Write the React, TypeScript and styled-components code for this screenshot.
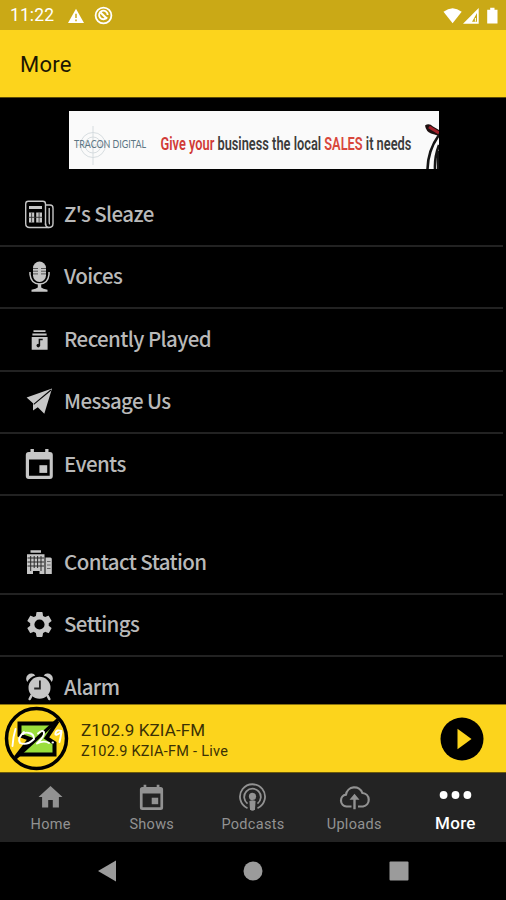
import React from "react";
import styled, { createGlobalStyle } from "styled-components";

const yellow = "#fcd41c";

const GlobalStyle = createGlobalStyle`
  * { box-sizing: border-box; }
  body { margin: 0; background: #000; overflow: hidden; }
`;

const Screen = styled.div`
  width: 506px;
  height: 900px;
  display: flex;
  flex-direction: column;
  overflow: hidden;
  background: #000;
  font-family: Roboto, sans-serif;
`;

const StatusBar = styled.header`
  flex: 0 0 30px;
  display: flex;
  align-items: center;
  padding: 1px 7px 0 10px;
  background: #caa916;
  color: #fff;
`;

const Clock = styled.span`
  width: 57px;
  font-size: 17.5px;
  line-height: 29px;
  letter-spacing: 0.1px;
`;

const StatusIcons = styled.div<{ $right?: boolean }>`
  display: flex;
  align-items: center;
  margin-left: ${(p) => (p.$right ? "auto" : "0")};
  gap: ${(p) => (p.$right ? "0" : "9px")};
`;

const TitleBar = styled.div`
  flex: 0 0 68px;
  display: flex;
  align-items: center;
  padding: 1px 20px 0;
  background: ${yellow};
  border-bottom: 1px solid #5c4c08;
`;

const Title = styled.h1`
  margin: 0;
  font-size: 22px;
  font-weight: 400;
  letter-spacing: 0.25px;
  color: #1c1702;
`;

const Content = styled.main`
  flex: 1 1 0;
  min-height: 0;
  overflow: hidden;
  display: flex;
  flex-direction: column;
`;

const Banner = styled.div`
  flex: 0 0 58px;
  width: 370px;
  margin: 13px 0 15.4px 68.5px;
  background: #fafafa;
  svg { display: block; }
`;

const MenuGroup = styled.ul<{ $gap?: boolean }>`
  flex: none;
  list-style: none;
  padding: 0;
  margin: ${(p) => (p.$gap ? "35.8px" : "0")} 0 0;
`;

const MenuRow = styled.li`
  display: flex;
  align-items: center;
  height: 62.4px;
  padding-left: 20px;
  margin-right: 3px;
  border-bottom: 2px solid #222;
`;

const MenuIcon = styled.span`
  width: 39px;
  height: 39px;
  margin-right: 5px;
  color: #c6c6c6;
  svg { display: block; }
`;

const MenuLabel = styled.span`
  font-family: "Noto Sans CJK JP", "Noto Sans", sans-serif;
  font-weight: 500;
  font-size: 20.5px;
  letter-spacing: -0.6px;
  line-height: 30px;
  margin-top: -3px;
  color: #b9b9b9;
`;

const Player = styled.section`
  flex: 0 0 69px;
  display: flex;
  align-items: center;
  padding: 0 22px 0 4px;
  background: ${yellow};
  border-top: 1px solid #8a740f;
  border-bottom: 1px solid #6b590b;
`;

const TrackInfo = styled.div`
  flex: 1;
  margin-left: 12px;
  padding-top: 3px;
  color: #3b3105;
`;

const TrackName = styled.div`
  font-size: 17px;
  line-height: 22px;
  letter-spacing: 0.1px;
`;

const TrackStatus = styled.div`
  font-size: 14.5px;
  line-height: 21px;
  letter-spacing: 0.25px;
`;

const PlayButton = styled.button`
  padding: 0;
  border: 0;
  width: 44px;
  height: 44px;
  background: none;
  svg { display: block; }
`;

const TabBar = styled.nav`
  flex: 0 0 69px;
  display: grid;
  grid-template-columns: repeat(5, 1fr);
  background: #232323;
`;

const Tab = styled.div<{ $active?: boolean }>`
  display: flex;
  flex-direction: column;
  align-items: center;
  padding-top: 8px;
  color: ${(p) => (p.$active ? "#fff" : "#929292")};
  svg { display: block; flex: none; }
`;

const TabLabel = styled.span<{ $active?: boolean }>`
  font-size: ${(p) => (p.$active ? "17px" : "14.5px")};
  font-weight: ${(p) => (p.$active ? 500 : 400)};
  line-height: ${(p) => (p.$active ? "19px" : "22px")};
  letter-spacing: 0.3px;
`;

const SystemBar = styled.footer`
  flex: 0 0 58px;
  display: grid;
  grid-template-columns: repeat(3, 146px);
  justify-content: center;
  align-items: center;
  justify-items: center;
  color: #9b9b9b;
  svg { display: block; }
`;

const WarningIcon = () => (
  <svg width="18" height="16" viewBox="0 0 18 16">
    <path d="M9 0.8 17 15H1z" fill="#fff" />
    <path d="M9 5.7v4.3M9 11.5v1.7" stroke="#caa916" strokeWidth="1.5" />
  </svg>
);

const SyncIcon = () => (
  <svg width="19" height="19" viewBox="0 0 19 19" fill="none" stroke="#fff">
    <circle cx="9.5" cy="9.5" r="7.9" strokeWidth="1.8" />
    <path d="M13 11.3A4.3 4.3 0 1 1 13.7 9" strokeWidth="1.9" />
    <path d="m6.6 6.6 6.3 6.1" strokeWidth="2.1" />
  </svg>
);

const SignalIcons = () => (
  <svg width="56" height="20" viewBox="0 0 56 20" fill="#fff">
    <path d="M0.5 5.7Q9.6-1.4 18.7 5.7L9.6 17.2z" />
    <path fillRule="evenodd" d="M20 17.7 35.7 2v15.7zM29 15.7h5V7z" />
    <path d="M32.4 12v3.6" stroke="#fff" strokeWidth="1" />
    <path d="M44.2 3.8h3V1.8h4.3v2h3v13.6H44.2z" />
  </svg>
);

const BannerArt = () => (
  <svg width="370" height="58" viewBox="0 0 370 58" role="img">
    <g fill="none" stroke="#d3d9dc" strokeWidth="0.9">
      <circle cx="24" cy="34" r="12.5" />
      <circle cx="24" cy="34" r="8" />
      <path d="M24 15v39M7 34h34" />
    </g>
    <text x="5" y="37.3" fontFamily="Lato, sans-serif" fontSize="10.5" fill="#5c7684" textLength="72" lengthAdjust="spacingAndGlyphs">TRACON DIGITAL</text>
    <text
      transform="translate(91.5 39.3) scale(0.655 1)"
      fontFamily="Roboto, sans-serif"
      fontWeight="600"
      fontSize="19"
      fill="#3c3c3c"
      textLength="383"
      lengthAdjust="spacingAndGlyphs"
    >
      <tspan fill="#d13a36">Give your</tspan> business the local <tspan fill="#d8473c">SALES</tspan> it needs
    </text>
    <path d="M356 14.5q4-3 8 1l6 3.5v6q-5-2-8-2.500q-5-2-6-8z" fill="#1c1010" />
    <path d="M360 16q5 3 10 6" stroke="#a3202a" strokeWidth="3" fill="none" />
    <path d="M370 24Q359 39 358.500 58M370 34Q365.500 46 366 58" stroke="#151515" strokeWidth="2.600" fill="none" />
    <path d="M369 40v18" stroke="#151515" strokeWidth="2" />
  </svg>
);

const Glyph = ({ children, size = 39, box = 39 }: { children: React.ReactNode; size?: number; box?: number }) => (
  <svg width={size} height={size} viewBox={`0 0 ${box} ${box}`} fill="currentColor">{children}</svg>
);

const NewsIcon = () => (
  <Glyph>
    <g fill="none" stroke="currentColor" strokeWidth="1.4">
      <path d="M25.500 30V9q0-2.700-2.700-2.700H8.300Q5.700 6.300 5.700 9v19.500q0 4 4 4h19q4.300 0 4.300-4V13q0-3-3-3h-4.500" />
      <path d="M25.500 28.500q0 3.500 3 4M29.200 13v14q0 2 .8 2" />
    </g>
    <path d="M9 11h13v3H9zM9 17.500h5.200v10H9zM16.200 17.500h5.800v10h-5.800z" />
    <path d="M8.500 22.300h14M11.600 17.500v10M19.100 17.500v10" stroke="#333" strokeWidth=".9" />
  </Glyph>
);

const MicIcon = () => (
  <Glyph>
    <rect x="13" y="4.500" width="13" height="20.500" rx="6.500" />
    <path d="M10 15v2.500q1 9.500 9.500 9.500t9.500-9.500V15" fill="none" stroke="currentColor" strokeWidth="1.500" />
    <path d="M17.800 26.500h3.400v4q1.500 1.300 6.300 2.300v2h-16v-2q4.800-1 6.300-2.300z" />
    <path d="M13 11.500h5M13 14.200h5M13 16.900h5M21 11.500h5M21 14.200h5M21 16.900h5" stroke="#555" strokeWidth="1" />
  </Glyph>
);

const RecentIcon = () => (
  <Glyph>
    <path d="M13.500 10.300h12v1.800h-12zM12.400 13.500h14.200v1.900H12.400zM11.700 17h15.900v12.800H11.700z" />
    <circle cx="18.300" cy="25.600" r="1.800" fill="#111" />
    <path d="M19.400 25.500v-6h3.300" fill="none" stroke="#111" strokeWidth="1.500" />
  </Glyph>
);

const SendIcon = () => (
  <Glyph>
    <path d="M32 6.500 6.600 15.600 13 21.300V28.600L17.800 25.300 24.300 31.700z" />
    <path d="M31 8 13.700 22.300" stroke="#000" strokeWidth="1.100" />
  </Glyph>
);

const CalendarIcon = () => (
  <Glyph>
    <path fillRule="evenodd" d="M10.500 4h3.400v3h11.300V4h3.300v3h1.300q3 0 3 3v21q0 3-3 3H8.800q-3 0-3-3V10q0-3 3-3h1.700zM9 14.600v16.100h20.700V14.600z" />
    <path d="M19.400 20.200h7.800v7.700h-7.800z" />
  </Glyph>
);

const BuildingIcon = () => (
  <Glyph>
    <path d="M10.500 7.200H21v2.500H10.500zM7 11.200h17.500V31h-5v-3h-6.500v3H7z" />
    <path d="M25.500 14.500h4.800q1.500 0 1.500 1.500v15h-6.300z" />
    <path d="M7.500 15H24M7.500 19H24M7.500 23H24M10.700 13v15M14.200 13v12M17.600 13v12M21 13v15" stroke="#2b2b2b" strokeWidth="1" />
    <path d="M27 18.500h3.500M27 22h3.500M27 25.500h3.500" stroke="#666" strokeWidth="1" />
  </Glyph>
);

const GearIcon = () => (
  <Glyph>
    <g transform="translate(4.600 4.600) scale(1.240)">
      <path d="M19.430 12.980c.040-.320.070-.640.070-.980s-.030-.660-.070-.980l2.110-1.650c.190-.150.240-.420.120-.640l-2-3.460c-.120-.220-.390-.300-.610-.220l-2.490 1c-.520-.400-1.080-.730-1.690-.980l-.380-2.650C14.460 2.180 14.250 2 14 2h-4c-.250 0-.460.180-.490.420l-.380 2.650c-.610.250-1.170.590-1.690.980l-2.490-1c-.230-.090-.490 0-.610.220l-2 3.460c-.130.220-.070.490.120.640l2.110 1.650c-.040.320-.070.650-.070.980s.030.660.070.980l-2.110 1.650c-.190.150-.240.420-.120.640l2 3.460c.120.220.390.300.610.220l2.490-1c.520.400 1.080.730 1.690.980l.380 2.650c.030.240.240.420.490.420h4c.250 0 .460-.180.490-.420l.380-2.650c.610-.250 1.170-.590 1.690-.980l2.490 1c.230.090.490 0 .610-.220l2-3.460c.120-.220.070-.490-.120-.640l-2.110-1.650zM12 16.100a4.100 4.100 0 1 1 0-8.200 4.100 4.100 0 0 1 0 8.200z" />
    </g>
  </Glyph>
);

const AlarmIcon = () => (
  <Glyph>
    <circle cx="19.500" cy="19.800" r="11" />
    <path d="M7.300 14a5 5 0 1 1 8-6.500q-5.500 1.700-8 6.500zM31.700 14a5 5 0 1 0-8-6.500q5.500 1.700 8 6.500z" />
    <path d="m11.500 27.500-1.800 3.500M27.500 27.500l1.800 3.500" stroke="currentColor" strokeWidth="2.600" strokeLinecap="round" />
    <path d="M19.900 12.500v8h-5.700" fill="none" stroke="#222" strokeWidth="1.800" />
  </Glyph>
);

const StationLogo = () => (
  <svg width="65" height="65" viewBox="0 0 65 65" fill="none">
    <path d="M15.500 17.500H52L42.500 32l8 5v11.500H14L26 33l-10.500-4z" fill="#9ade3b" stroke="#000" strokeWidth="4" />
    <path d="m11 52.500 43-39" stroke="#000" strokeWidth="3.300" />
    <circle cx="32.500" cy="32.500" r="30" stroke="#000" strokeWidth="3.500" />
    <g stroke="#fff" strokeWidth="1.900" strokeLinecap="round" strokeLinejoin="round">
      <path d="M11.500 23Q9 31 8.500 40" />
      <path d="M20 26q-7 6-4 11 7 3 14-4 0-5-5-6-4-1-6 1" />
      <path d="M34 27.500q4-4 6-1.500 1 4-7 11.500 7-3.500 12-.5M48.500 36.500h.5" />
      <path d="M57.500 25q-5-2-6 2t6-1q-1 6-2 10" />
    </g>
  </svg>
);

const PlayIcon = () => (
  <svg width="44" height="44" viewBox="0 0 44 44">
    <circle cx="22" cy="22" r="21.500" fill="#000" />
    <path d="M17.500 11.800 31.500 22l-14 10.200z" fill={yellow} />
  </svg>
);

const HomeIcon = () => (
  <Glyph size={33} box={33}>
    <path d="M16.500 5 4.500 16h3.600v10.600h6.100v-7.500h4.600v7.500h6.100V16h3.600z" />
  </Glyph>
);

const ShowsIcon = () => (
  <Glyph size={33} box={33}>
    <path fillRule="evenodd" d="M8.600 3.700h2.700v2.400h10.400V3.700h2.700v2.400h1.200q2.500 0 2.500 2.500v17.800q0 2.500-2.500 2.500H7.400q-2.500 0-2.500-2.500V8.600q0-2.500 2.500-2.500h1.200zM7.600 12.500v13.700h17.800V12.500z" />
    <path d="M16.700 16.700h6.500v6.500h-6.500z" />
  </Glyph>
);

const PodcastIcon = () => (
  <Glyph size={33} box={33}>
    <g fill="none" stroke="currentColor" strokeWidth="1.800">
      <path d="M11.500 27.200A12.500 12.500 0 1 1 21.500 27.200" />
      <path d="M11.500 22.600a8.300 8.300 0 1 1 10 0" />
    </g>
    <circle cx="16.500" cy="15.400" r="3.600" />
    <path d="M13.400 20q3.100-1.500 6.200 0l-.6 8.300q-2.500 3-5 0z" />
  </Glyph>
);

const UploadIcon = () => (
  <Glyph size={33} box={33}>
    <path d="M13.500 25.500H8.500a6 6 0 0 1-.5-11.900A8.500 8.500 0 0 1 24.400 12a6.800 6.800 0 0 1 .6 13.500h-5" fill="none" stroke="currentColor" strokeWidth="2.200" />
    <path d="m16.500 12.700 5 6h-3.800v9.500h-2.400v-9.500h-3.800z" />
  </Glyph>
);

const MoreIcon = () => (
  <Glyph size={33} box={33}>
    <circle cx="4.600" cy="14" r="3.900" />
    <circle cx="16.500" cy="14" r="3.900" />
    <circle cx="28.400" cy="14" r="3.900" />
  </Glyph>
);

const mainMenu = [
  { label: "Z's Sleaze", Icon: NewsIcon },
  { label: "Voices", Icon: MicIcon },
  { label: "Recently Played", Icon: RecentIcon },
  { label: "Message Us", Icon: SendIcon },
  { label: "Events", Icon: CalendarIcon },
];

const stationMenu = [
  { label: "Contact Station", Icon: BuildingIcon },
  { label: "Settings", Icon: GearIcon },
  { label: "Alarm", Icon: AlarmIcon },
];

const tabs = [
  { label: "Home", Icon: HomeIcon },
  { label: "Shows", Icon: ShowsIcon },
  { label: "Podcasts", Icon: PodcastIcon },
  { label: "Uploads", Icon: UploadIcon },
  { label: "More", Icon: MoreIcon, active: true },
];

const Menu = ({ items, gap }: { items: typeof mainMenu; gap?: boolean }) => (
  <MenuGroup $gap={gap}>
    {items.map(({ label, Icon }) => (
      <MenuRow key={label}>
        <MenuIcon><Icon /></MenuIcon>
        <MenuLabel>{label}</MenuLabel>
      </MenuRow>
    ))}
  </MenuGroup>
);

export default function App() {
  return (
    <Screen>
      <GlobalStyle />
      <StatusBar>
        <Clock>11:22</Clock>
        <StatusIcons>
          <WarningIcon />
          <SyncIcon />
        </StatusIcons>
        <StatusIcons $right>
          <SignalIcons />
        </StatusIcons>
      </StatusBar>
      <TitleBar>
        <Title>More</Title>
      </TitleBar>
      <Content>
        <Banner><BannerArt /></Banner>
        <Menu items={mainMenu} />
        <Menu items={stationMenu} gap />
      </Content>
      <Player>
        <StationLogo />
        <TrackInfo>
          <TrackName>Z102.9 KZIA-FM</TrackName>
          <TrackStatus>Z102.9 KZIA-FM - Live</TrackStatus>
        </TrackInfo>
        <PlayButton aria-label="Play"><PlayIcon /></PlayButton>
      </Player>
      <TabBar>
        {tabs.map(({ label, Icon, active }) => (
          <Tab key={label} $active={active}>
            <Icon />
            <TabLabel $active={active}>{label}</TabLabel>
          </Tab>
        ))}
      </TabBar>
      <SystemBar>
        <svg width="18" height="22" viewBox="0 0 18 22"><path d="M0 11 18 .5v21z" fill="currentColor" /></svg>
        <svg width="20" height="20" viewBox="0 0 20 20"><circle cx="10" cy="10" r="9.500" fill="currentColor" /></svg>
        <svg width="20" height="20" viewBox="0 0 20 20"><rect x=".5" y=".5" width="19" height="19" rx="1" fill="currentColor" /></svg>
      </SystemBar>
    </Screen>
  );
}
